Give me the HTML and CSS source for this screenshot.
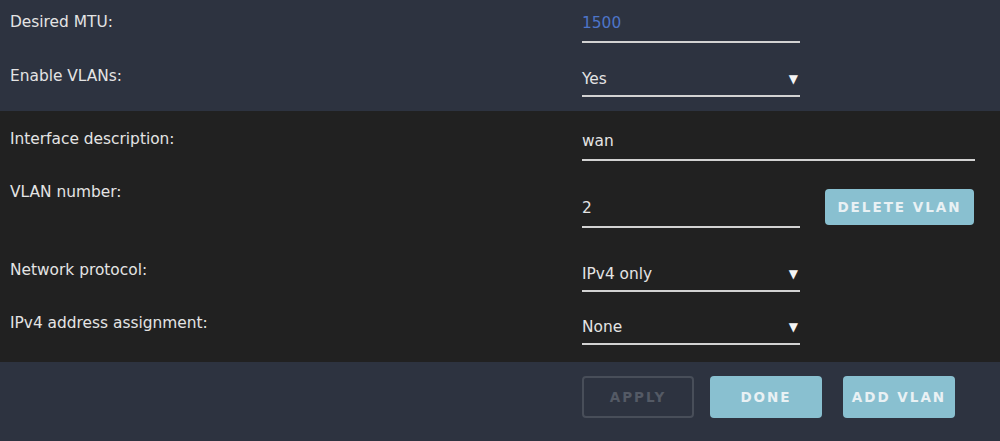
FILE: index.html
```html
<!DOCTYPE html>
<html lang="en">
<head>
  <meta charset="UTF-8" />
  <title>Interface settings</title>
  <link rel="stylesheet" href="styles.css">
</head>
<body>
  <div class="panel panel-top">
    <div class="row">
      <label>Desired MTU:</label>
      <div class="field"><span class="value accent">1500</span></div>
    </div>
    <div class="row">
      <label>Enable VLANs:</label>
      <div class="field select"><span class="value">Yes</span><span class="caret">&#9660;</span></div>
    </div>
  </div>

  <div class="panel panel-vlan">
    <div class="row row-desc">
      <label>Interface description:</label>
      <div class="field wide"><span class="value">wan</span></div>
    </div>
    <div class="row row-num">
      <label>VLAN number:</label>
      <div class="field"><span class="value">2</span></div>
      <button class="btn">Delete VLAN</button>
    </div>
    <div class="row row-proto">
      <label>Network protocol:</label>
      <div class="field select"><span class="value">IPv4 only</span><span class="caret">&#9660;</span></div>
    </div>
    <div class="row row-proto">
      <label>IPv4 address assignment:</label>
      <div class="field select"><span class="value">None</span><span class="caret">&#9660;</span></div>
    </div>
  </div>

  <div class="panel panel-actions">
    <button class="btn btn-ghost">Apply</button>
    <button class="btn">Done</button>
    <button class="btn">Add VLAN</button>
  </div>
</body>
</html>
```

FILE: styles.css
```css
* {
  box-sizing: border-box;
  font-family: 'DejaVu Sans', sans-serif;
}
body {
  margin: 0;
  background: #2d3340;
  color: #e4e4e4;
  font-size: 15.4px;
  line-height: 20px;
}
.panel {
  padding: 0 0 0 10px;
}
.panel-top {
  background: #2d3340;
  height: 111px;
}
.panel-vlan {
  background: #212121;
  height: 251px;
}
.panel-actions {
  background: #2d3340;
  height: 79px;
  display: flex;
  padding-left: 582px;
  padding-top: 14px;
}
.row {
  display: grid;
  grid-template-columns: 572px 218px auto;
  align-items: start;
  height: 54px;
  padding-top: 12px;
}
.row label {
  display: block;
}
.field {
  display: flex;
  justify-content: space-between;
  align-items: center;
  height: 31px;
  padding-top: 1px;
  padding-bottom: 8px;
  border-bottom: 2px solid #d2d2d2;
}
.field.select {
  padding-top: 3px;
  padding-bottom: 6px;
}
.field.wide {
  width: 393px;
}
.value.accent {
  color: #4d75c8;
}
.caret {
  font-size: 12px;
  padding-right: 2px;
  color: #f4f4f4;
}
.row-desc {
  height: 53px;
  padding-top: 18px;
}
.row-desc .field {
  margin-top: 1px;
}
.row-num {
  height: 78px;
  padding-top: 18px;
}
.row-num .field {
  margin-top: 15px;
}
.row-num .btn {
  margin-top: 7px;
  margin-left: 25px;
  width: 149px;
}
.row-proto {
  height: 53px;
  padding-top: 18px;
}
.row-proto .field {
  margin-top: 1px;
}
.btn {
  height: 36px;
  width: 112px;
  border: none;
  border-radius: 4px;
  background: #89c0d0;
  color: #e9f1f4;
  font-size: 13.5px;
  font-weight: bold;
  letter-spacing: 2px;
  text-transform: uppercase;
  cursor: pointer;
}
.panel-actions .btn {
  height: 42px;
  margin-right: 16px;
}
.panel-actions .btn:last-child {
  margin-left: 5px;
}
.btn-ghost {
  background: transparent;
  border: 2px solid #484e59;
  color: #545a65;
}
```
